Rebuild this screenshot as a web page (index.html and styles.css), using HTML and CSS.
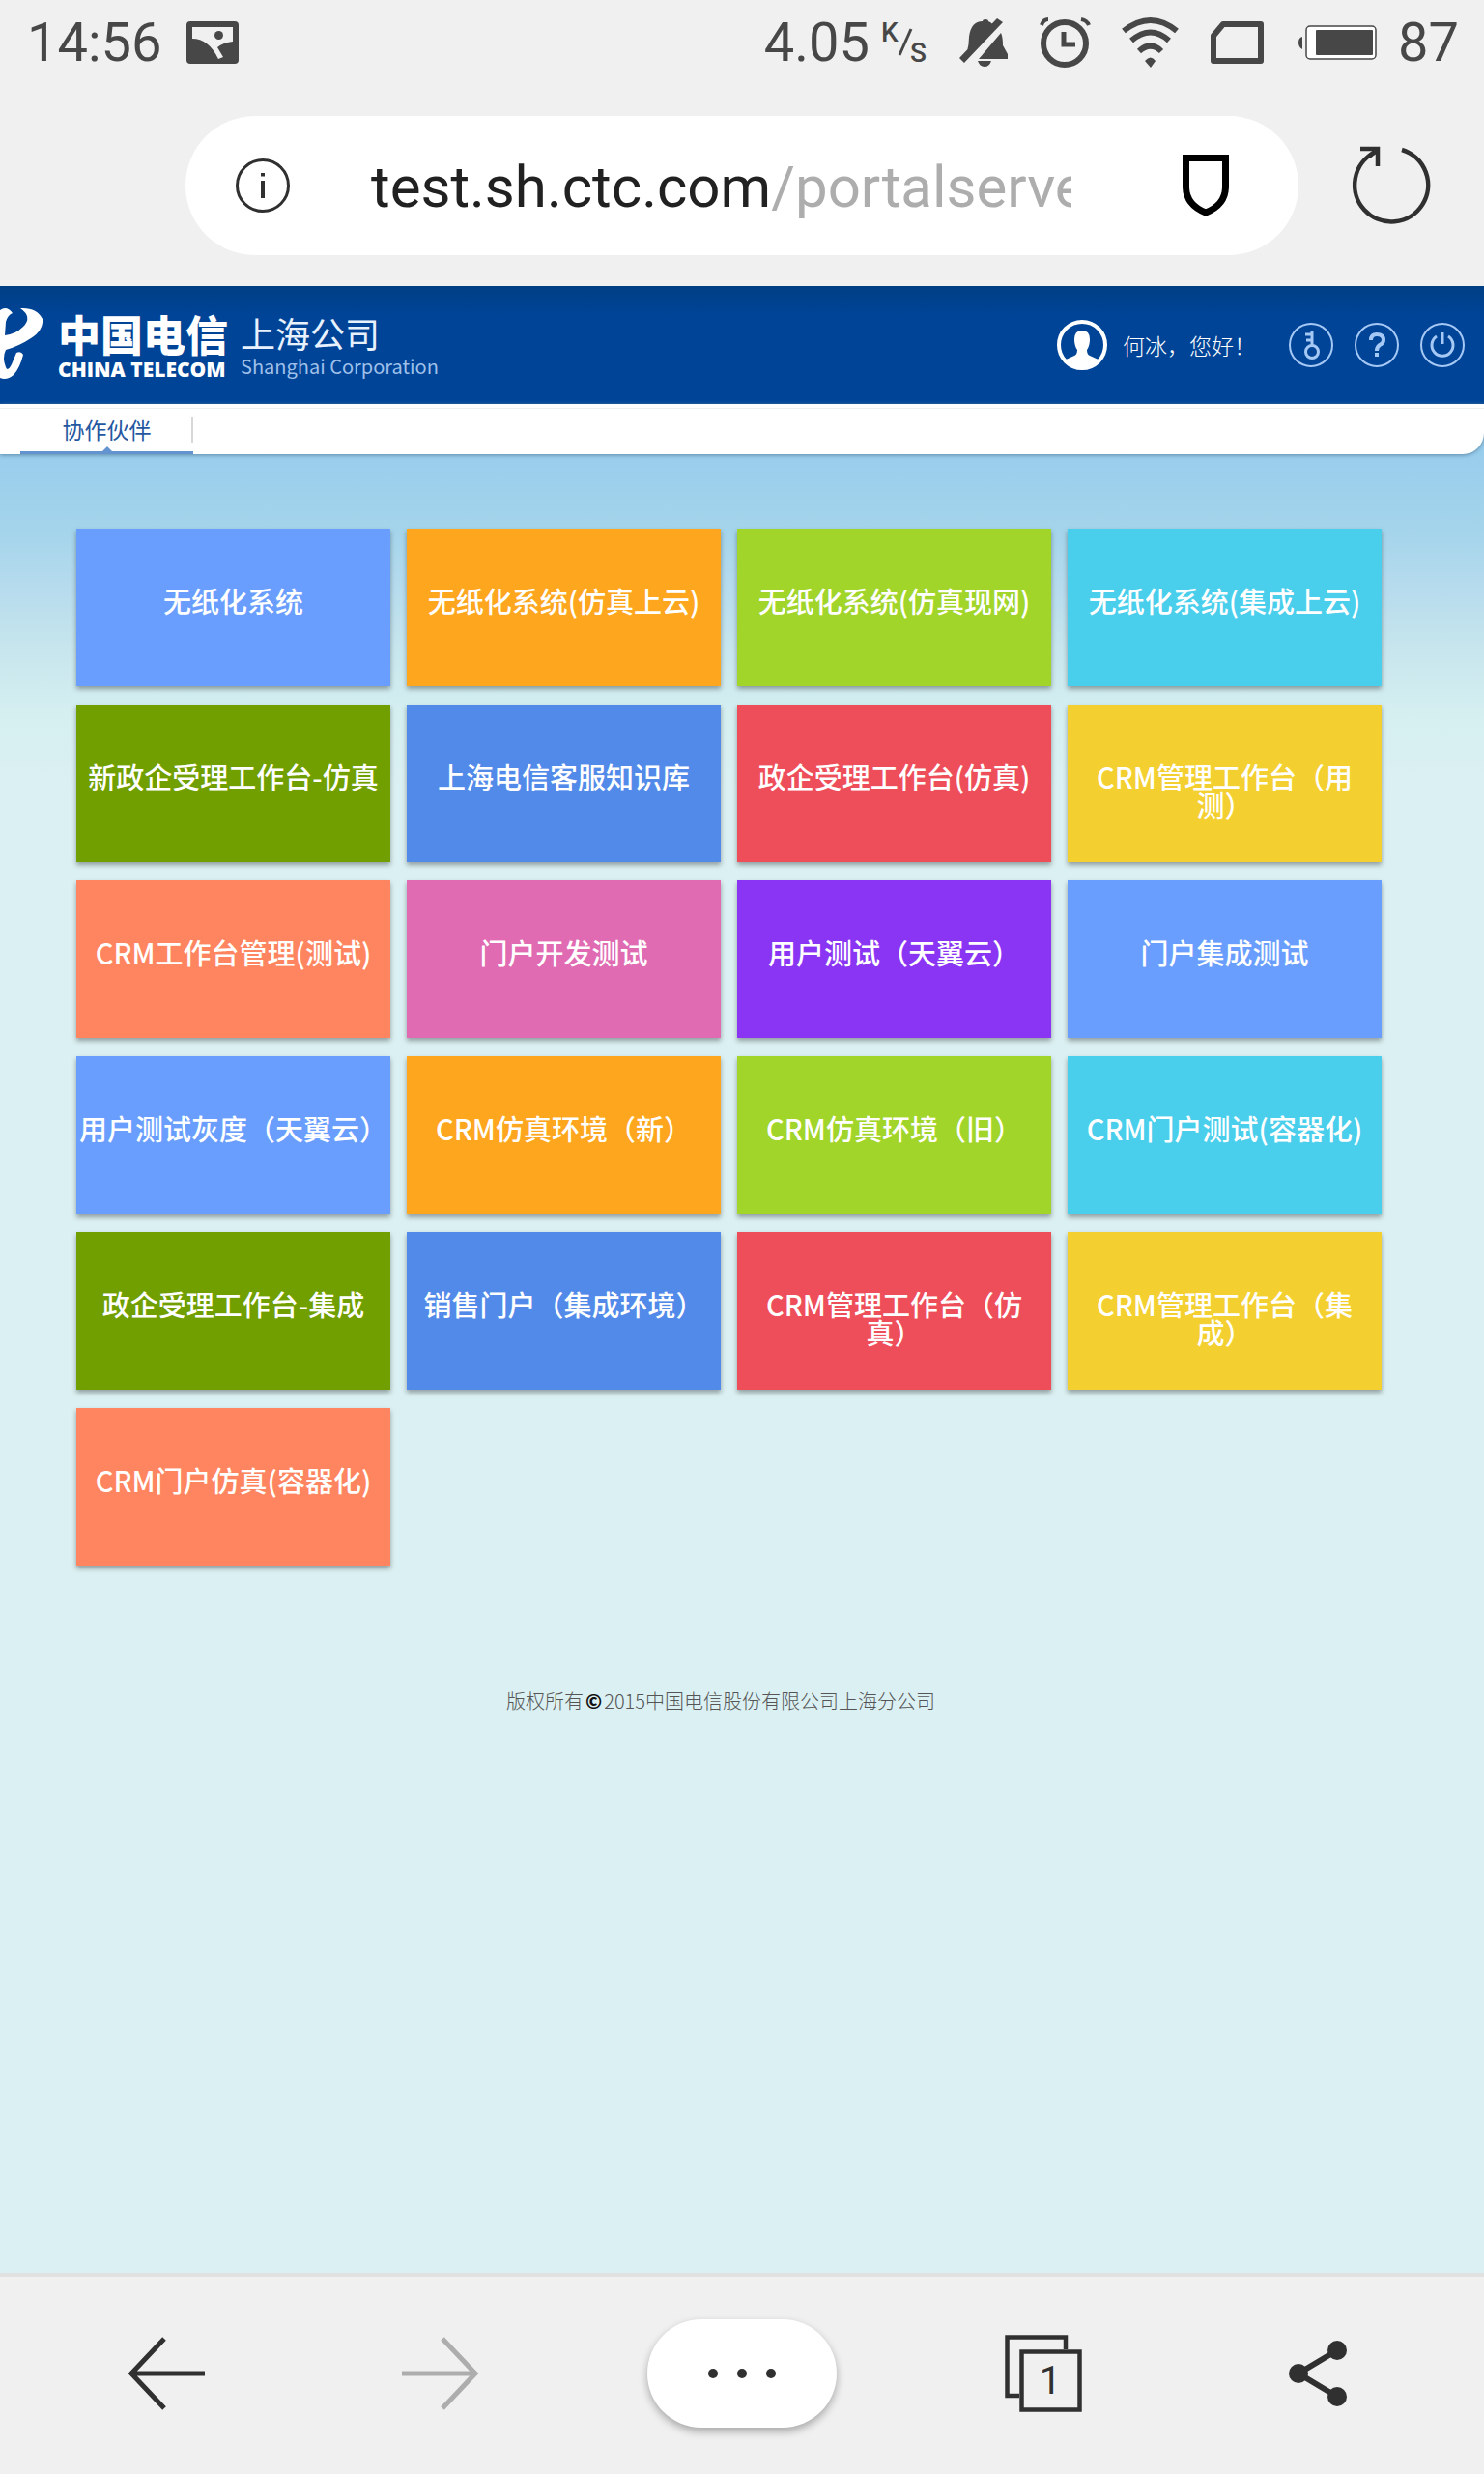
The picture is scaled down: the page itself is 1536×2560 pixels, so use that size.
FILE: index.html
```html
<!DOCTYPE html>
<html lang="zh-CN">
<head>
<meta charset="utf-8">
<meta name="viewport" content="width=device-width, initial-scale=1">
<title>中国电信上海公司门户</title>
<link rel="stylesheet" href="styles.css">
</head>
<body>
<div class="status">
  <time class="status-text">14:56</time>
  <svg class="shot" width="54" height="44" viewBox="0 0 54 44"><rect width="54" height="44" rx="4" fill="#474747"/><path d="M6 6H48V21Q38 22 32 27L38 37L33 39Q23 18 6 18Z" fill="#f0f0f0"/><circle cx="33.500" cy="14.500" r="4.500" fill="#474747"/></svg>
  <div class="status-right">
    <div class="speed"><span class="status-text">4.05</span>
      <svg width="48" height="46" viewBox="0 0 48 46" class="unit"><text x="0" y="22">K</text><path d="M19 36L31 9" stroke="#474747" stroke-width="3"/><text x="30" y="43">S</text></svg>
    </div>
    <svg width="52" height="52" viewBox="0 0 52 52" fill="#474747"><path d="M9 35Q11 28 11 20Q13 4 25 4Q25 2 28 2Q31 2 31 4Q34 5 36 8L12 37ZM40 1L46 5L6 47L1 42ZM44 16Q46 20 46 29L51 38V43H21ZM20 45H34Q32 51 27 51Q22 51 20 45Z"/></svg>
    <svg width="52" height="52" viewBox="0 0 52 52" fill="none" stroke="#474747"><circle cx="26" cy="27" r="22" stroke-width="6"/><path d="M25 15V28H37" stroke-width="5"/><path d="M2 8Q4 2 9 2M43 2Q49 3 51 8" stroke-width="4"/></svg>
    <svg width="60" height="52" viewBox="0 0 60 52" fill="none" stroke="#474747" stroke-width="6"><path d="M3 14Q31-8 58 14M11 24Q31 7 50 24M19 35Q31 24 42 35"/><path d="M25 45Q31 38 36 45L31 52Z" fill="#474747" stroke="none"/></svg>
    <svg width="60" height="44" viewBox="0 0 60 44" fill="none" stroke="#474747" stroke-width="6"><path d="M14 3H53V41H4V15Z" stroke-linejoin="round"/></svg>
    <svg width="82" height="36" viewBox="0 0 82 36"><path d="M4 12Q0 13 0 18Q0 23 4 25Z" fill="#474747"/><rect x="8" y="1" width="72" height="34" rx="4" fill="#fff" stroke="#474747" stroke-width="1.500"/><rect x="18" y="5" width="59" height="26" rx="1" fill="#474747"/></svg>
    <span class="status-text battery-level">87</span>
  </div>
</div>

<div class="address">
  <div class="pill">
    <button class="icon-btn" aria-label="网站信息"><svg width="56" height="56" viewBox="0 0 56 56"><circle cx="28" cy="28" r="26.500" fill="none" stroke="#303030" stroke-width="3"/><path d="M28 23V41M28 15V18.500" stroke="#303030" stroke-width="4"/></svg></button>
    <button class="url">test.sh.ctc.com<span class="path">/portalserver</span></button>
    <button class="icon-btn" aria-label="安全防护"><svg width="48" height="64" viewBox="0 0 48 64"><path d="M3.500 3.500H44.500V34Q44 52 24 60Q4 52 3.500 34Z" fill="none" stroke="#000" stroke-width="7"/></svg></button>
  </div>
  <button class="icon-btn" aria-label="刷新"><svg width="84" height="84" viewBox="0 0 84 84" fill="none" stroke="#303030"><path d="M54 5A38 38 0 1 1 26 7.500" stroke-width="4.500"/><path d="M11 4H29V22M27 6L20 12" stroke-width="4.500"/></svg></button>
</div>

<header class="banner">
  <a class="logo" href="#">
    <svg width="46" height="76" viewBox="0 0 46 76" fill="#fff"><path d="M0 2Q7-3 13 5Q8 7 6 14L5 28Q16 27 24 19Q34 9 21 0Q38-1 44 11Q45 23 32 31Q20 39 6 43Q2 51 6 61Q8 66 12 58L17 46Q22 44 24 48Q21 61 14 69Q7 75 0 72Z"/></svg>
    <span class="brand"><span class="brand-cn">中国电信</span><span class="brand-en">CHINA TELECOM</span></span>
    <span class="branch"><span class="branch-cn">上海公司</span><span class="branch-en">Shanghai Corporation</span></span>
  </a>
  <div class="user">
    <svg width="52" height="52" viewBox="0 0 52 52"><circle cx="26" cy="26" r="24" fill="none" stroke="#fff" stroke-width="4"/><path d="M26 11Q34 11 34 20Q34 27 31 31Q31 36 34 37L45 42Q37 51 26 51Q15 51 7 42L18 37Q21 36 21 31Q18 27 18 20Q18 11 26 11Z" fill="#fff"/></svg>
    <span>何冰，您好！</span>
  </div>
  <nav class="tools">
    <a href="#" aria-label="修改密码"><svg width="46" height="46" viewBox="0 0 46 46"><circle cx="23" cy="23" r="22"/><g stroke-width="3"><circle cx="24" cy="30" r="6.500"/><path d="M24 24V8M24 12H17M24 18H18"/></g></svg></a>
    <a href="#" aria-label="帮助"><svg width="46" height="46" viewBox="0 0 46 46"><circle cx="23" cy="23" r="22"/><path d="M17 18Q17 12 23 12Q30 12 30 18Q30 21 26 23Q23 25 23 29M23 31V35" stroke-width="4"/></svg></a>
    <a href="#" aria-label="退出"><svg width="46" height="46" viewBox="0 0 46 46"><circle cx="23" cy="23" r="22"/><path d="M23 10V22M17 14A11 11 0 1 0 29 14" stroke-width="3"/></svg></a>
  </nav>
</header>

<main class="page">
  <nav class="tabs"><a class="tab" href="#">协作伙伴</a></nav>
  <div class="tiles">
    <a class="tile sky" href="#">无纸化系统</a>
    <a class="tile orange" href="#">无纸化系统(仿真上云)</a>
    <a class="tile lime" href="#">无纸化系统(仿真现网)</a>
    <a class="tile cyan" href="#">无纸化系统(集成上云)</a>
    <a class="tile green" href="#">新政企受理工作台-仿真</a>
    <a class="tile blue" href="#">上海电信客服知识库</a>
    <a class="tile red" href="#">政企受理工作台(仿真)</a>
    <a class="tile yellow" href="#">CRM管理工作台（用测）</a>
    <a class="tile coral" href="#">CRM工作台管理(测试)</a>
    <a class="tile pink" href="#">门户开发测试</a>
    <a class="tile purple" href="#">用户测试（天翼云）</a>
    <a class="tile sky" href="#">门户集成测试</a>
    <a class="tile sky" href="#">用户测试灰度（天翼云）</a>
    <a class="tile orange" href="#">CRM仿真环境（新）</a>
    <a class="tile lime" href="#">CRM仿真环境（旧）</a>
    <a class="tile cyan" href="#">CRM门户测试(容器化)</a>
    <a class="tile green" href="#">政企受理工作台-集成</a>
    <a class="tile blue" href="#">销售门户（集成环境）</a>
    <a class="tile red" href="#">CRM管理工作台（仿真）</a>
    <a class="tile yellow" href="#">CRM管理工作台（集成）</a>
    <a class="tile coral" href="#">CRM门户仿真(容器化)</a>
  </div>
  <footer class="copyright">版权所有<span class="mark">©</span>2015中国电信股份有限公司上海分公司</footer>
</main>

<nav class="toolbar">
  <button class="slot" aria-label="后退"><svg width="80" height="76" viewBox="0 0 80 76" fill="none" stroke="#303030" stroke-width="5"><path d="M80 38H4M38 2L4 38L38 74"/></svg></button>
  <button class="slot" aria-label="前进" disabled><svg width="80" height="76" viewBox="0 0 80 76" fill="none" stroke="#adadad" stroke-width="5"><path d="M0 38H76M42 2L76 38L42 74"/></svg></button>
  <button class="more" aria-label="菜单"><i></i><i></i><i></i></button>
  <button class="slot" aria-label="标签页"><svg width="80" height="80" viewBox="0 0 80 80" fill="none" stroke="#303030" stroke-width="4.500"><path d="M15 63H2.500V2.500H63V15"/><rect x="17.500" y="17.500" width="60" height="60"/><text x="47" y="61" class="count">1</text></svg></button>
  <button class="slot" aria-label="分享"><svg width="60" height="68" viewBox="0 0 60 68" fill="#303030"><path d="M50 10L10 34L50 58" fill="none" stroke="#303030" stroke-width="6"/><circle cx="50" cy="10" r="10"/><circle cx="10" cy="34" r="10"/><circle cx="50" cy="58" r="10"/></svg></button>
</nav>
</body>
</html>
```
FILE: styles.css
```css
* { box-sizing: border-box; }
body {
  margin: 0;
  min-height: 100vh;
  display: flex;
  flex-direction: column;
  background: #f0f0f0;
  font-family: "Noto Sans CJK SC", sans-serif;
}
svg { display: block; flex: none; overflow: visible; }
a { color: inherit; text-decoration: none; }
button { border: 0; padding: 0; background: none; font: inherit; color: inherit; }

.status {
  display: flex;
  align-items: center;
  height: 88px;
  padding: 0 26px 0 28px;
  font-family: Roboto, sans-serif;
  color: #474747;
}
.status-text { font-size: 56px; line-height: 88px; }
.shot { margin-left: 26px; }
.status-right { display: flex; align-items: center; gap: 32px; margin-left: auto; }
.speed { display: flex; align-items: center; gap: 12px; }
.unit { font-size: 28px; font-weight: 500; fill: #474747; }
.battery-level { margin-left: -11px; }

.address {
  display: flex;
  align-items: center;
  gap: 53px;
  padding: 32px 55px 32px 192px;
}
.pill {
  flex: 1;
  min-width: 0;
  display: flex;
  align-items: center;
  height: 144px;
  padding: 0 72px 0 52px;
  border-radius: 72px;
  background: #fff;
}
.url {
  flex: 1;
  min-width: 0;
  margin: 0 115px 0 84px;
  padding-top: 4px;
  overflow: hidden;
  white-space: nowrap;
  text-align: left;
  font-family: Roboto, sans-serif;
  font-size: 60px;
  line-height: 88px;
  color: #212121;
}
.path { color: #adadad; }

.banner {
  display: flex;
  align-items: center;
  height: 122px;
  padding-right: 20px;
  background: linear-gradient(#003f85, #004497 30px);
  color: #fff;
}
.logo { display: flex; align-items: center; margin-right: auto; }
.brand { display: flex; flex-direction: column; margin-left: 14px; }
.brand-cn { font-size: 44px; font-weight: 900; line-height: 50px; }
.brand-en { font-family: "Open Sans", sans-serif; font-size: 21px; font-weight: 800; line-height: 24px; }
.branch { display: flex; flex-direction: column; margin-left: 13px; }
.branch-cn { font-size: 36px; line-height: 44px; color: #e8f2ff; }
.branch-en { font-size: 20px; line-height: 26px; color: #9fc0ea; }
.user { display: flex; align-items: center; gap: 16px; margin-right: 34px; font-size: 23px; font-weight: 300; }
.tools { display: flex; gap: 22px; }
.tools svg { fill: none; stroke: #a5c8f5; stroke-width: 2; }

.page {
  flex: 1;
  background: linear-gradient(#99cdec 50px, #a3d4eb 128px, #b4daed 182px, #c6e5ed 250px, #d5eff1 320px, #dbf0f2 400px);
}
.tabs {
  display: flex;
  height: 52px;
  padding-left: 21px;
  border-radius: 0 0 22px 0;
  background: linear-gradient(#eef1f2, #eef1f2) 0 4px / 100% 1px no-repeat #fff;
  box-shadow: 0 1px 4px #5d8aa8;
}
.tab {
  position: relative;
  width: 179px;
  border-bottom: 3px solid #6394d0;
  text-align: center;
  font-size: 23px;
  line-height: 52px;
  color: #24579f;
}
.tab::before {
  content: "";
  position: absolute;
  right: 0;
  top: 14px;
  height: 26px;
  border-right: 2px solid #d8d8d8;
}
.tab::after {
  content: "";
  position: absolute;
  left: 50%;
  bottom: 0;
  margin-left: -5px;
  border: 5px solid transparent;
  border-top: 0;
  border-bottom-color: #6394d0;
}

.tiles {
  display: grid;
  grid-template-columns: repeat(4, 1fr);
  grid-auto-rows: 163px;
  gap: 19px 17px;
  padding: 77px 106px 0 79px;
}
.tile {
  padding: 60px 3px 0;
  text-align: center;
  text-spacing-trim: space-all;
  font-size: 29px;
  font-weight: 500;
  line-height: 29px;
  color: #fff;
  box-shadow: 0 3px 5px rgba(0, 0, 0, 0.35);
}
.sky { background: #699efe; }
.orange { background: #fea61e; }
.lime { background: #a2d52a; }
.cyan { background: #49ceec; }
.green { background: #719f00; }
.blue { background: #528ae9; }
.red { background: #ee4d5a; }
.yellow { background: #f4cf30; }
.coral { background: #ff8560; }
.pink { background: #e06bb2; }
.purple { background: #8a35f3; }

.copyright {
  margin-top: 125px;
  padding-right: 44px;
  text-align: center;
  font-size: 20px;
  font-weight: 300;
  line-height: 30px;
  color: #555;
}
.mark { margin: 0 2px; font-weight: 900; color: #111; }

.toolbar {
  display: flex;
  align-items: center;
  justify-content: space-between;
  height: 208px;
  padding: 0 102px 4px;
  border-top: 4px solid #e1e1e1;
}
.slot { width: 140px; display: flex; justify-content: center; }
.count {
  font-family: Roboto, sans-serif;
  font-size: 40px;
  text-anchor: middle;
  fill: #303030;
  stroke: none;
}
.more {
  display: flex;
  align-items: center;
  justify-content: center;
  gap: 20px;
  width: 196px;
  height: 112px;
  border-radius: 56px;
  background: #fff;
  box-shadow: 0 4px 8px rgba(0, 0, 0, 0.3);
}
.more i { width: 10px; height: 10px; border-radius: 50%; background: #303030; }
```
